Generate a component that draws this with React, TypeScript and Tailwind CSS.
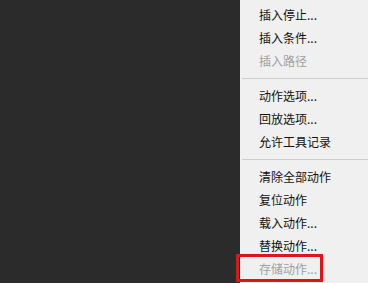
import React from "react";

type Item = { label: string; disabled?: boolean } | "sep";

const items: Item[] = [
  { label: "插入停止..." },
  { label: "插入条件..." },
  { label: "插入路径", disabled: true },
  "sep",
  { label: "动作选项..." },
  { label: "回放选项..." },
  { label: "允许工具记录" },
  "sep",
  { label: "清除全部动作" },
  { label: "复位动作" },
  { label: "载入动作..." },
  { label: "替换动作..." },
  { label: "存储动作...", disabled: true },
];

export default function App() {
  return (
    <div
      className="relative flex h-[283px] w-[368px] overflow-hidden bg-[#2b2b2b]"
      style={{ fontFamily: '"Noto Sans CJK SC", "Noto Sans", sans-serif' }}
    >
      <div className="w-[240px] shrink-0 bg-[#2b2b2b]" />
      <div className="flex flex-1 flex-col bg-[#f0f0f0] pt-[3px]">
        {items.map((it, i) =>
          it === "sep" ? (
            <div key={i} className="flex h-[12px] items-center pl-[2px]">
              <div className="h-px w-full bg-[#cdcdcd]" />
            </div>
          ) : (
            <div
              key={i}
              className={`flex h-[23px] items-center pl-[19px] text-[12px] leading-none ${
                it.disabled ? "text-[#a0a0a0]" : "text-[#111111]"
              }`}
            >
              {it.label}
            </div>
          )
        )}
      </div>
      <div className="absolute left-[236px] top-[254px] h-[28px] w-[87px] border-[3px] border-[#e0141b]" />
    </div>
  );
}
